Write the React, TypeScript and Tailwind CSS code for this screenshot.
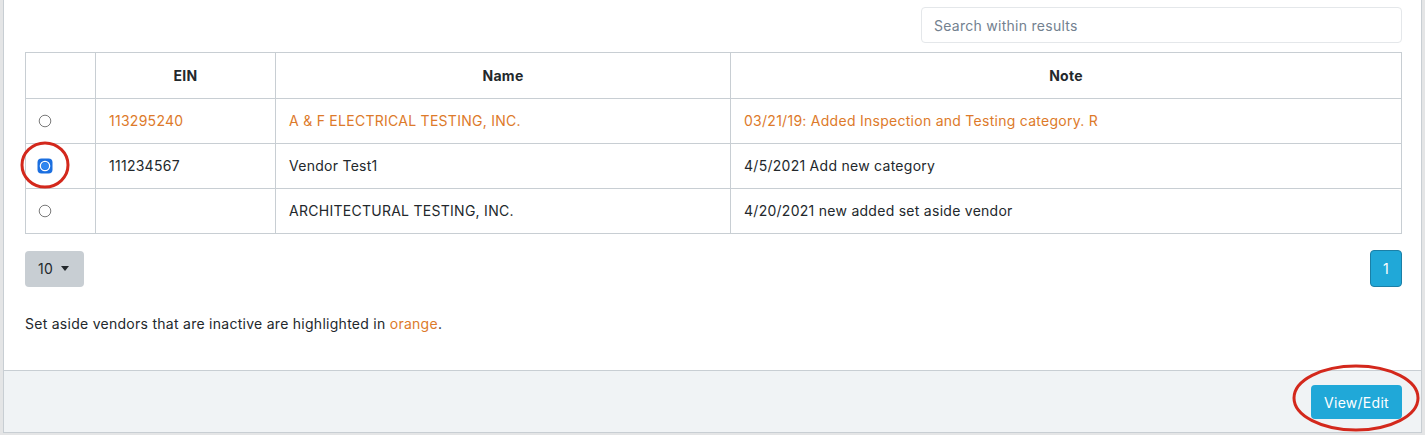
import React from 'react';

type Vendor = { ein: string; name: string; note: string; inactive?: boolean; checked?: boolean };

const vendors: Vendor[] = [
  { ein: '113295240', name: 'A & F ELECTRICAL TESTING, INC.', note: '03/21/19: Added Inspection and Testing category. R', inactive: true },
  { ein: '111234567', name: 'Vendor Test1', note: '4/5/2021 Add new category', checked: true },
  { ein: '', name: 'ARCHITECTURAL TESTING, INC.', note: '4/20/2021 new added set aside vendor' },
];

const RadioMark = ({ checked }: { checked?: boolean }) =>
  checked ? (
    <svg width="16" height="16" viewBox="0 0 16 16" className="block -ml-[1px]">
      <rect x="0.5" y="0.5" width="15" height="15" rx="4" fill="#1b6fe0" />
      <circle cx="8" cy="8" r="4.6" fill="none" stroke="#ffffff" strokeWidth="1.4" />
      <circle cx="8" cy="8" r="3.4" fill="#2f86f0" />
    </svg>
  ) : (
    <svg width="14" height="14" viewBox="0 0 14 14" className="block">
      <circle cx="7" cy="7" r="5.8" fill="#ffffff" stroke="#7a7a7a" strokeWidth="1" />
    </svg>
  );

export default function App() {
  return (
    <div
      className="relative w-[1425px] h-[435px] overflow-hidden bg-[#e4e5e6] text-[#23282c] text-[14px] tracking-[0.27px]"
      style={{ fontFamily: 'Inter, "Noto Sans", sans-serif' }}
    >
      <div className="ml-[3px] mr-[3px] bg-white border-x border-b border-[#c8ced3]">
        {/* body */}
        <div className="pl-[21px] pr-[19px] pt-[7px] pb-[36px]">
          <div className="flex justify-end">
            <input
              placeholder="Search within results"
              className="w-[481px] h-[36px] px-[12px] rounded-[4px] border border-[#e4e7ea] text-[14px] tracking-[0.27px] placeholder:text-[#73818f] outline-none"
            />
          </div>

          <table className="mt-[9px] w-full table-fixed border-collapse">
            <colgroup>
              <col className="w-[70px]" />
              <col className="w-[180px]" />
              <col className="w-[455px]" />
              <col />
            </colgroup>
            <thead>
              <tr className="h-[46px]">
                <th className="border border-[#c8ced3]"></th>
                <th className="border border-[#c8ced3] font-bold text-center">EIN</th>
                <th className="border border-[#c8ced3] font-bold text-center">Name</th>
                <th className="border border-[#c8ced3] font-bold text-center">Note</th>
              </tr>
            </thead>
            <tbody>
              {vendors.map((v) => (
                <tr key={v.name} className={`h-[45px] ${v.inactive ? 'text-[#dd7a2a]' : ''}`}>
                  <td className="border border-[#c8ced3] pl-[12px]">
                    <RadioMark checked={v.checked} />
                  </td>
                  <td className="border border-[#c8ced3] px-[13px] pb-[1px]">{v.ein}</td>
                  <td className="border border-[#c8ced3] px-[13px] pb-[1px]">{v.name}</td>
                  <td className="border border-[#c8ced3] px-[13px] pb-[1px] whitespace-nowrap overflow-hidden">{v.note}</td>
                </tr>
              ))}
            </tbody>
          </table>

          <div className="mt-[16px] flex items-center justify-between">
            <button className="h-[36px] w-[59px] rounded-[4px] bg-[#c8ced3] flex items-center pl-[13px] gap-[8px] text-[14px]">
              10
              <span className="w-0 h-0 border-x-[4px] border-x-transparent border-t-[5px] border-t-[#23282c]"></span>
            </button>
            <button className="h-[37px] w-[32px] rounded-[4px] bg-[#20a8d8] border border-[#1b7fa6] text-white text-[14px]">
              1
            </button>
          </div>

          <p className="mt-[26px] leading-[21px]">
            Set aside vendors that are inactive are highlighted in <span className="text-[#dd7a2a]">orange</span>.
          </p>
        </div>

        {/* footer */}
        <div className="border-t border-[#c8ced3] bg-[#f0f3f5] flex justify-end pt-[14px] pb-[13px] pr-[19px]">
          <button className="h-[34px] w-[91px] rounded-[4px] bg-[#20a8d8] text-white text-[14px]">View/Edit</button>
        </div>
      </div>

      {/* annotation rings */}
      <svg className="absolute left-0 top-0 pointer-events-none" width="1425" height="435">
        <ellipse cx="45" cy="165" rx="23" ry="22" fill="none" stroke="#d3281c" strokeWidth="3" />
        <ellipse cx="1356" cy="398" rx="62" ry="32" fill="none" stroke="#d3281c" strokeWidth="3" />
      </svg>
    </div>
  );
}
